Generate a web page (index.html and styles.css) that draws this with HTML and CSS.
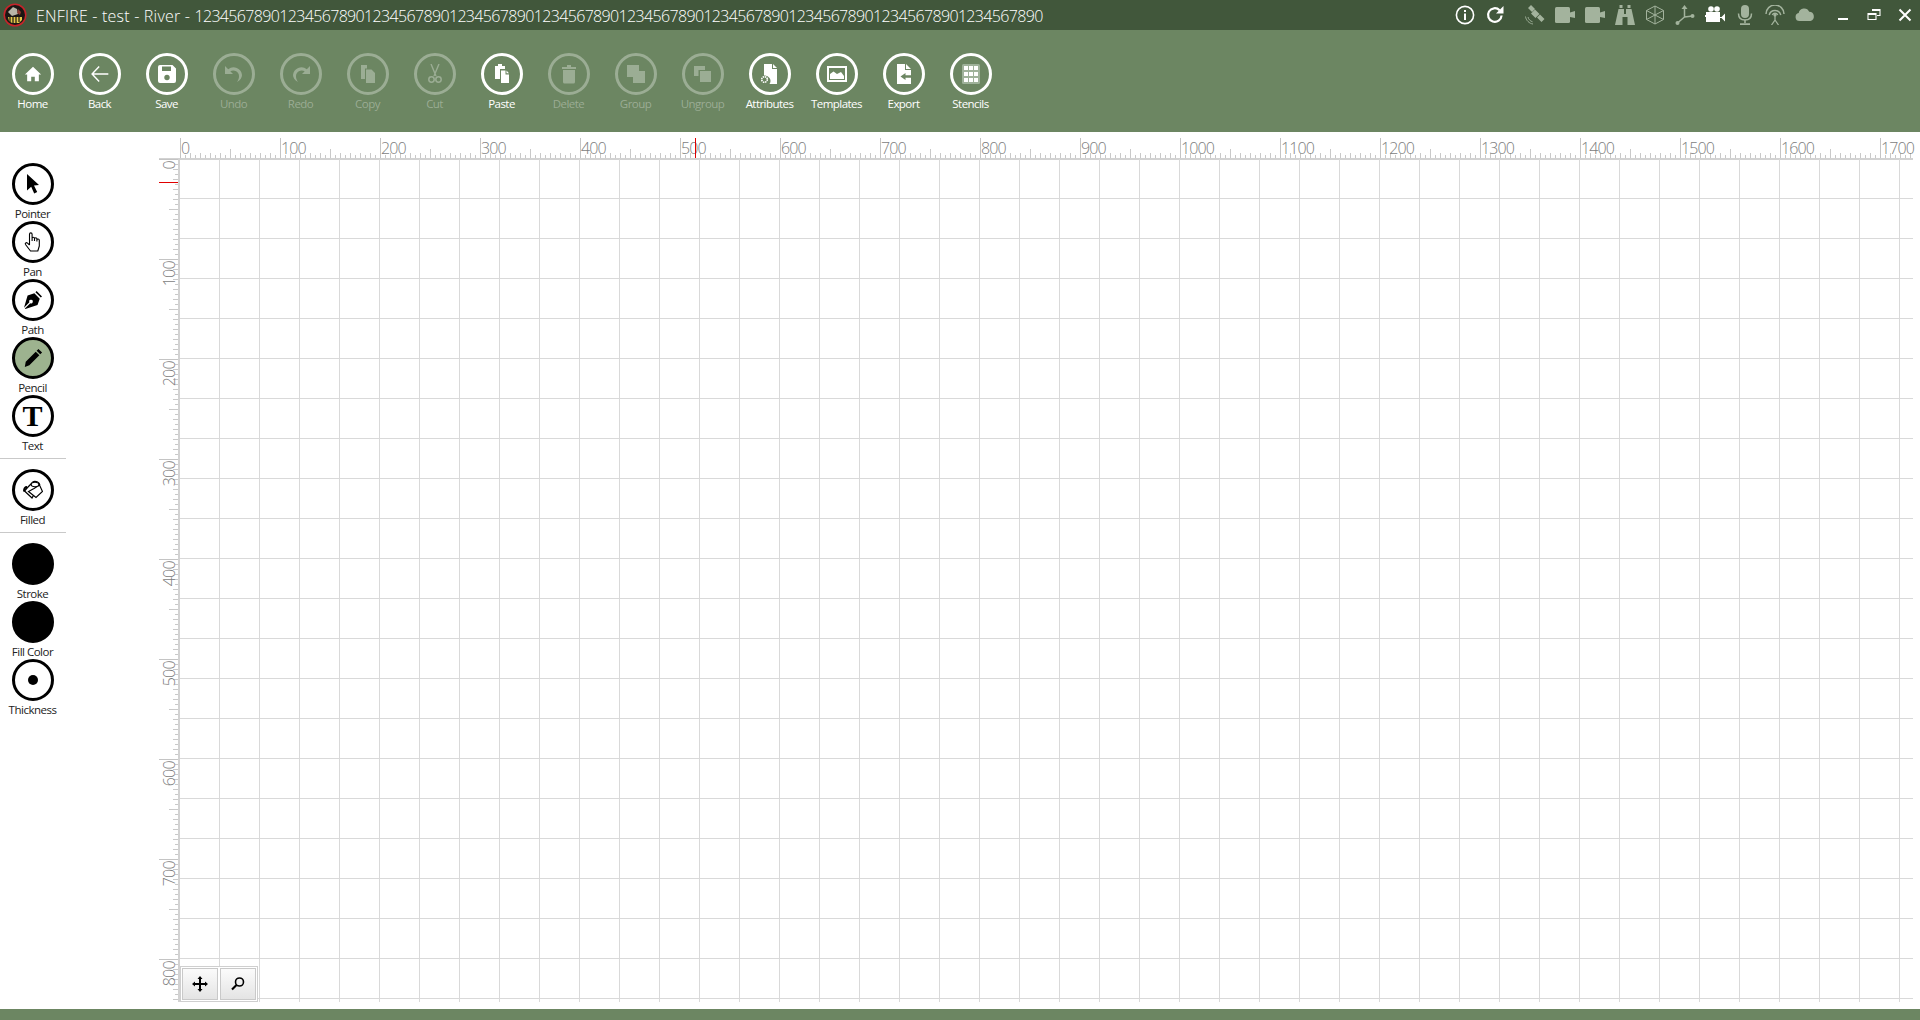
FILE: index.html
```html
<!DOCTYPE html>
<html lang="en">
<head>
<meta charset="utf-8">
<title>ENFIRE</title>
<link rel="stylesheet" href="styles.css">
</head>
<body>
<header class="titlebar">
  <svg class="logo" viewBox="0 0 24 24"><circle cx="12" cy="12" r="11.5" fill="#c8232a"/><circle cx="12" cy="12" r="10" fill="#1b1714"/><path d="M5 9l5-5 4 2 1 5-6 2z" fill="#b9b6a8"/><path d="M5 14h14v3l-3 3H9l-3-2z" fill="#e3c94a"/><path d="M7 14v5M10 13v7M13 13v7M16 14v5" stroke="#1b1714" stroke-width="1.2"/><path d="M15 6l3 3-1 3-3-2z" fill="#8d3b30"/></svg>
  <div class="title"><span class="title-name">ENFIRE - test - River - </span><span class="title-num">1234567890123456789012345678901234567890123456789012345678901234567890123456789012345678901234567890</span></div>
  <div class="status-icons">
    <svg class="si on" viewBox="0 0 20 20"><circle cx="10" cy="10" r="8.6" fill="none" stroke="currentColor" stroke-width="1.6"/><rect x="9" y="8.5" width="2" height="6.5"/><rect x="9" y="5" width="2" height="2"/></svg>
    <svg class="si on" viewBox="0 0 20 20"><path d="M16.6 10.5a6.8 6.8 0 1 1-2-5.3" fill="none" stroke="currentColor" stroke-width="2.2"/><path d="M18.5 1v7.5H11z"/></svg>
    <span class="si-gap"></span>
    <svg class="si" viewBox="0 0 20 20"><path d="M6 0l4 4-3 3-4-4zM10 4.500l4.500 4.500-4 4L6 8.500zM15 9.500l4.500 4.500-3 3-4.500-4.500z"/><path d="M.5 11.500c.4 3.700 3.800 7.100 7.500 7.500M3 12c.3 2.200 2.500 4.400 4.500 4.700" fill="none" stroke="currentColor" stroke-width=".9"/></svg>
    <svg class="si" viewBox="0 0 20 20"><rect x="0" y="2" width="15" height="16" rx="1.500"/><path d="M15 7.500l5-1.500v7l-5-1z"/></svg>
    <svg class="si" viewBox="0 0 20 20"><rect x="0" y="2" width="15" height="16" rx="1.500"/><path d="M15 7.500l5-1.500v7l-5-1z"/></svg>
    <svg class="si" viewBox="0 0 20 20"><path d="M4.500 0h3v3h-3zM12.500 0h3v3h-3zM3.500 4h5.500v5h2V4h5.500L20 20h-7.500v-8h-5v8H0z"/></svg>
    <svg class="si" viewBox="0 0 20 20"><path d="M10 1l8.500 4.500v9L10 19l-8.500-4.500v-9zM1.500 5.500L10 10l8.500-4.500M10 10v9M10 1v9M1.500 14.500L10 10l8.500 4.500" fill="none" stroke="currentColor"/></svg>
    <svg class="si" viewBox="0 0 20 20"><path d="M9.500 3v9L2.500 18M9.500 12l8-1" fill="none" stroke="currentColor" stroke-width="1.500"/><path d="M9.500 0l3 4h-6z"/><circle cx="2.500" cy="18" r="2"/><circle cx="17.500" cy="11" r="2"/></svg>
    <svg class="si on" viewBox="0 0 20 20"><circle cx="6" cy="4" r="2.800"/><circle cx="12" cy="4" r="2.800"/><rect x="1" y="7" width="14" height="10"/><path d="M15 12h1.500l3.500-3.500v8L16.500 13H15z"/><rect x="0" y="10" width="1.500" height="2"/></svg>
    <svg class="si" viewBox="0 0 20 20"><rect x="6" y="0" width="8" height="13" rx="4"/><path d="M3.500 8.500c0 4.500 3 6.500 6.500 6.500s6.500-2 6.500-6.500" fill="none" stroke="currentColor" stroke-width="1.500"/><path d="M9.200 15h1.600v3h-1.600zM5 18.200h10V20H5z"/></svg>
    <svg class="si" viewBox="0 0 20 20"><path d="M1 9a9 9 0 0 1 18 0M4.200 10a6 6 0 0 1 11.600 0M7.300 10a3 3 0 0 1 5.400 0" fill="none" stroke="currentColor" stroke-width="1.500"/><circle cx="10" cy="10" r="1.600"/><path d="M10 11v4L6.500 20M10 15l3.500 5" fill="none" stroke="currentColor" stroke-width="1.300"/></svg>
    <svg class="si" viewBox="0 0 20 20"><path d="M4.500 16a4 4 0 0 1-.8-7.900 5.500 5.500 0 0 1 10.500-1.300A4.700 4.700 0 0 1 15.500 16z"/></svg>
    <span class="si-gap wide"></span>
    <svg class="wb" viewBox="0 0 16 16"><rect x="3" y="11" width="10" height="2"/></svg>
    <svg class="wb" viewBox="0 0 16 16"><path d="M6 2.500h8v6h-3M2 6.500h8v6H2zM6 3.500h8M2 7.500h8" fill="none" stroke="currentColor" stroke-width="1.100"/></svg>
    <svg class="wb" viewBox="0 0 16 16"><path d="M2.500 2.500l11 11M13.500 2.500l-11 11" fill="none" stroke="currentColor" stroke-width="2"/></svg>
  </div>
</header>

<nav class="toolbar">
  <div class="tb"><div class="ring"><svg class="ico-home" viewBox="0 0 20 20"><path d="M10 2L1 10.500h2.500V18h4.500v-5h4v5h4.500v-7.500H19z"/></svg></div><span>Home</span></div>
  <div class="tb"><div class="ring"><svg viewBox="0 0 24 24"><path d="M11 3L2.500 12l8.500 9M3 12h19" fill="none" stroke="currentColor" stroke-width="1.700"/></svg></div><span>Back</span></div>
  <div class="tb"><div class="ring"><svg viewBox="0 0 20 20"><path d="M3 1h12.500L19 4.500V17a2 2 0 0 1-2 2H3a2 2 0 0 1-2-2V3a2 2 0 0 1 2-2zM5 2.500V7h9V2.500z" fill-rule="evenodd"/><circle cx="10" cy="13.500" r="2.700" fill="#6c8662"/></svg></div><span>Save</span></div>
  <div class="tb off"><div class="ring"><svg viewBox="0 0 20 20"><path d="M1 2v8h8L6.300 7.300A5.800 5.800 0 0 1 15 12.500c0 2-.8 3.700-2 5.500 3.500-2 5-4.500 5-7A8.500 8.500 0 0 0 4.200 5.200z"/></svg></div><span>Undo</span></div>
  <div class="tb off"><div class="ring"><svg viewBox="0 0 20 20"><path d="M19 2v8h-8l2.700-2.700A5.800 5.800 0 0 0 5 12.500c0 2 .8 3.700 2 5.500-3.500-2-5-4.500-5-7a8.500 8.500 0 0 1 13.800-5.800z"/></svg></div><span>Redo</span></div>
  <div class="tb off"><div class="ring"><svg viewBox="0 0 20 20"><path d="M3 1h6v3.500H7V15H3zM8 5.500h5.500L17 9v10H8zM14 6l2.500 2.500H14z"/></svg></div><span>Copy</span></div>
  <div class="tb off"><div class="ring"><svg viewBox="0 0 20 20"><path d="M6 0l5 12M14 0L9 12" fill="none" stroke="currentColor" stroke-width="1.400"/><circle cx="6.500" cy="15.500" r="2.700" fill="none" stroke="currentColor" stroke-width="1.500"/><circle cx="13.500" cy="15.500" r="2.700" fill="none" stroke="currentColor" stroke-width="1.500"/></svg></div><span>Cut</span></div>
  <div class="tb"><div class="ring"><svg viewBox="0 0 20 20"><path d="M6 0h4v2h3v3H8v10H3V2h3zM9 6.500h4.500v4H17V19H9zM14.500 6.500l2.500 2.800h-2.500z"/></svg></div><span>Paste</span></div>
  <div class="tb off"><div class="ring"><svg viewBox="0 0 20 20"><path d="M3 3h5V1h4v2h5v2H3zM4 6h12v12a1.500 1.500 0 0 1-1.500 1.500h-9A1.500 1.500 0 0 1 4 18z"/></svg></div><span>Delete</span></div>
  <div class="tb off"><div class="ring"><svg viewBox="0 0 20 20"><path d="M1 1h12v6h6v12H7v-6H1z"/></svg></div><span>Group</span></div>
  <div class="tb off"><div class="ring"><svg viewBox="0 0 20 20"><path d="M1 2h11v4H5.500v6H1zM7 7h11v11H7z"/></svg></div><span>Ungroup</span></div>
  <div class="tb"><div class="ring"><svg viewBox="0 0 20 20"><path d="M4 0h8v5h5v15H9.500a5.500 5.500 0 0 0-5.500-8.500zM13 0l4 4h-4z"/><circle cx="4.500" cy="15.500" r="2.800" fill="none" stroke="currentColor" stroke-width="1.600" stroke-dasharray="1.500 .7"/></svg></div><span>Attributes</span></div>
  <div class="tb"><div class="ring"><svg viewBox="0 0 20 16"><path d="M0 0h20v16H0zM2 2v12h16V2z" fill-rule="evenodd"/><path d="M3 13V8l3.500-2.500L10 8l4-2 3 4v3z"/></svg></div><span>Templates</span></div>
  <div class="tb"><div class="ring"><svg viewBox="0 0 20 20"><path d="M3 0h8v6h6v14H3zM12 0l5 5h-5z"/><path d="M6.500 12.500l5-3.500v2.200H19v2.600h-7.500V16z" fill="#6c8662"/></svg></div><span>Export</span></div>
  <div class="tb"><div class="ring"><svg viewBox="0 0 20 20"><rect x="1" y="0" width="18" height="20" rx="1.500" fill="#9fb29a"/><path d="M3 2h4v4H3zM8 2h4v4H8zM13 2h4v4h-4zM3 8h4v4H3zM8 8h4v4H8zM13 8h4v4h-4zM3 14h4v4H3zM8 14h4v4H8zM13 14h4v4h-4z"/></svg></div><span>Stencils</span></div>
</nav>

<main class="workspace">
  <aside class="tools">
    <div class="tool"><div class="dial"><svg viewBox="0 0 20 20"><path d="M4 0l12 11-5 .5 3.200 6.500-3 1.500-3-6.800L4 16.500z"/></svg></div><span>Pointer</span></div>
    <div class="tool"><div class="dial"><svg viewBox="0 0 20 20"><path d="M6.500 13V2.200a1.300 1.300 0 0 1 2.600 0V9m0-2.500a1.200 1.200 0 0 1 2.400 0V9m0-2a1.200 1.200 0 0 1 2.400 0V9.500m0-1.300a1.200 1.200 0 0 1 2.400 0V14l-1.500 5H7.500L2.500 12.500c-.8-1.200.8-2.500 2-1.300L6.500 13" fill="none" stroke="#000" stroke-width="1.100" stroke-linejoin="round"/></svg></div><span>Pan</span></div>
    <div class="tool"><div class="dial"><svg class="ico-path" viewBox="0 0 20 20"><path d="M14 0l6 6-1.300 1.300-6-6zM11.500 2.500l6 6-2.500 7L1.500 20l-.5-.5 6-6a2 2 0 1 0-1-1l-6 6L4 5z"/></svg></div><span>Path</span></div>
    <div class="tool active"><div class="dial"><svg viewBox="0 0 22 22"><path d="M17 1l4 4-2 2-4-4zM14 4l4 4L7 19l-5 2 1-6z"/></svg></div><span>Pencil</span></div>
    <div class="tool"><div class="dial"><span class="t-glyph">T</span></div><span>Text</span></div>
    <hr class="rule first">
    <div class="tool"><div class="dial"><svg viewBox="0 0 20 20"><path d="M10.500 1.500c2.800-.8 6 1 6.300 3.500M10.500 1.500L4.500 7.500M16.500 5L9 18 1.500 11l3-3.500" fill="none" stroke="#000" stroke-width="1.300"/><path d="M11 8.500l5.500-3.500 3 6.500-6.500 6-7.500-6z" fill="#fff" stroke="#000" stroke-width="1.200"/><path d="M4 7C2 7 1 9 1 11.500" fill="none" stroke="#000" stroke-width="2"/><ellipse cx="12" cy="4.500" rx="3.800" ry="2.200" fill="#fff" stroke="#000" stroke-width="1.100"/></svg></div><span>Filled</span></div>
    <hr class="rule second">
    <div class="tool"><div class="dial solid"></div><span>Stroke</span></div>
    <div class="tool"><div class="dial solid"></div><span>Fill Color</span></div>
    <div class="tool"><div class="dial"><i class="dot"></i></div><span>Thickness</span></div>
  </aside>

  <section class="board">
    <div class="hruler">
      <div class="h-cell">0</div><div class="h-cell">100</div><div class="h-cell">200</div><div class="h-cell">300</div><div class="h-cell">400</div><div class="h-cell">500</div><div class="h-cell">600</div><div class="h-cell">700</div><div class="h-cell">800</div><div class="h-cell">900</div><div class="h-cell">1000</div><div class="h-cell">1100</div><div class="h-cell">1200</div><div class="h-cell">1300</div><div class="h-cell">1400</div><div class="h-cell">1500</div><div class="h-cell">1600</div><div class="h-cell">1700</div>
      <i class="mark-x"></i>
    </div>
    <div class="board-body">
      <div class="vruler">
        <div class="v-cell"><span>0</span></div><div class="v-cell"><span>100</span></div><div class="v-cell"><span>200</span></div><div class="v-cell"><span>300</span></div><div class="v-cell"><span>400</span></div><div class="v-cell"><span>500</span></div><div class="v-cell"><span>600</span></div><div class="v-cell"><span>700</span></div><div class="v-cell"><span>800</span></div>
        <i class="mark-y"></i>
      </div>
      <div class="grid">
        <div class="nav-box">
          <button class="nav-btn"><svg viewBox="0 0 16 16"><path d="M8 0l2.500 3H9v4h4V5.500l3 2.500-3 2.500V9H9v4h1.500L8 16l-2.500-3H7V9H3v1.500L0 8l3-2.500V7h4V3H5.500z"/></svg></button>
          <button class="nav-btn"><svg viewBox="0 0 16 16"><circle cx="9.500" cy="6" r="4" fill="none" stroke="#000" stroke-width="1.600"/><path d="M6.500 9L2 13.500" stroke="#000" stroke-width="2.200"/></svg></button>
        </div>
      </div>
    </div>
  </section>
</main>
<footer class="statusbar"></footer>
</body>
</html>
```
FILE: styles.css
```css
* { box-sizing: border-box; }
html, body { margin: 0; height: 100%; }
body {
  width: 1920px; height: 1020px; overflow: hidden; background: #fff;
  display: flex; flex-direction: column;
  font-family: "Open Sans", "Noto Sans", sans-serif; color: #000;
}
.titlebar {
  height: 30px; flex: none; background: #41573b; color: #fff;
  display: flex; align-items: center; padding-left: 3px;
}
.logo { width: 24px; height: 24px; flex: none; }
.title { margin-left: 9px; padding-top: 2px; font-size: 16px; font-weight: 300; white-space: pre; color: #fff; }
.title-name { letter-spacing: .2px; }
.title-num { letter-spacing: -.65px; }
.status-icons { margin-left: auto; display: flex; align-items: center; padding-right: 7px; color: #a3b39d; }
.si { width: 20px; height: 20px; margin: 0 5px; fill: currentColor; flex: none; }
.si.on { color: #fff; fill: #fff; }
.si-gap { width: 10px; }
.si-gap.wide { width: 15px; }
.wb { width: 16px; height: 16px; color: #fff; fill: #fff; flex: none; margin-left: 15px; }
.si-gap.wide + .wb { margin-left: 0; }

.toolbar {
  height: 102px; flex: none; background: #6c8662;
  display: flex; padding-top: 23px;
}
.tb { width: 67px; display: flex; flex-direction: column; align-items: center; color: #fff; }
.tb:first-child { margin-left: -1px; }
.ring {
  width: 42px; height: 42px; border: 3px solid currentColor; border-radius: 50%;
  display: flex; align-items: center; justify-content: center;
}
.ring svg { width: 20px; height: 20px; fill: currentColor; }
.ring svg.ico-home { width: 18px; height: 18px; }
.tb span { font-size: 11.500px; line-height: 16px; margin-top: 1px; white-space: nowrap; letter-spacing: -.55px; }
.tb.off { color: rgba(255,255,255,.32); }

.workspace { flex: 1; min-height: 0; display: flex; }
.tools { width: 66px; flex: none; padding-top: 31px; }
.tool { width: 65px; height: 58px; display: flex; flex-direction: column; align-items: center; }
.tool > span { font-size: 11.500px; line-height: 12px; margin-top: 3px; white-space: nowrap; color: #222; letter-spacing: -.5px; }
.dial {
  width: 42px; height: 42px; flex: none; border: 3px solid #000; border-radius: 50%;
  display: flex; align-items: center; justify-content: center;
}
.dial svg { width: 20px; height: 20px; fill: #000; }
.dial svg.ico-path { width: 18px; height: 18px; }
.tool.active .dial { background: #9db38f; }
.dial.solid { background: #000; }
.dot { width: 10px; height: 10px; border-radius: 50%; background: #000; }
.t-glyph { font-family: "Liberation Serif", serif; font-weight: 700; font-size: 30px; line-height: 30px; }
.rule { border: 0; height: 1px; background: #c9c9c9; margin: 0; }
.rule.first { margin: 5px 0 10px; }
.rule.second { margin: 5px 0 10px; }

.board { width: 1754px; margin-left: 93px; padding-top: 6px; display: flex; flex-direction: column; height: 870px; }
.hruler {
  height: 22px; flex: none; position: relative; display: flex; padding-left: 21px;
  background:
    linear-gradient(#d2d2d2, #d2d2d2) 0 20px / 100% 2px no-repeat,
    repeating-linear-gradient(90deg, #c4c4c4 0 1px, transparent 1px 100px) 21px 0 / 100% 20px no-repeat,
    repeating-linear-gradient(90deg, #c9c9c9 0 1px, transparent 1px 50px) 21px 11px / 100% 9px no-repeat,
    repeating-linear-gradient(90deg, #c9c9c9 0 1px, transparent 1px 10px) 21px 15px / 100% 5px no-repeat,
    repeating-linear-gradient(90deg, #c9c9c9 0 1px, transparent 1px 5px) 21px 17px / 100% 3px no-repeat;
}
.h-cell { width: 100px; flex: none; padding-left: 1px; font-size: 16px; letter-spacing: -.9px; line-height: 20px; font-weight: 300; color: #7d7d7d; white-space: nowrap; }
.mark-x { position: absolute; left: 536px; top: 0; width: 1px; height: 20px; background: #e00000; }
.board-body { flex: 1; min-height: 0; display: flex; margin-top: -1px; }
.vruler {
  width: 21px; flex: none; position: relative; height: 843px;
  border-right: 2px solid #d2d2d2;
  background:
    repeating-linear-gradient(180deg, #c4c4c4 0 1px, transparent 1px 100px) 0 0 / 19px 100% no-repeat,
    repeating-linear-gradient(180deg, #c9c9c9 0 1px, transparent 1px 50px) 10px 0 / 9px 100% no-repeat,
    repeating-linear-gradient(180deg, #c9c9c9 0 1px, transparent 1px 10px) 14px 0 / 5px 100% no-repeat,
    repeating-linear-gradient(180deg, #c9c9c9 0 1px, transparent 1px 5px) 16px 0 / 3px 100% no-repeat;
}
.v-cell { height: 100px; position: relative; }
.v-cell span {
  position: absolute; right: -1px; top: 2px;
  writing-mode: vertical-rl; transform: rotate(180deg);
  font-size: 16px; letter-spacing: -.7px; line-height: 20px; font-weight: 300; color: #7d7d7d; white-space: nowrap;
}
.mark-y { position: absolute; left: 0; top: 23px; width: 19px; height: 1px; background: #e00000; }
.grid {
  width: 1733px; height: 843px; position: relative;
  background:
    linear-gradient(90deg, transparent 39px, #d9d9d9 39px) 0 0 / 40px 40px,
    linear-gradient(180deg, transparent 39px, #d9d9d9 39px) 0 0 / 40px 40px;
}
.nav-box {
  position: absolute; left: 0; bottom: 0; width: 78px; height: 36px;
  border: 1px solid #cfcfcf; background: #fff; padding: 1px; display: flex; gap: 2px;
}
.nav-btn {
  width: 36px; height: 32px; padding: 0; border: 1px solid #c9c9c9;
  background: linear-gradient(#fbfbfb, #e4e4e4);
  display: flex; align-items: center; justify-content: center;
}
.nav-btn svg { width: 16px; height: 16px; fill: #000; }
.statusbar { height: 11px; flex: none; background: #6c8662; }
```
